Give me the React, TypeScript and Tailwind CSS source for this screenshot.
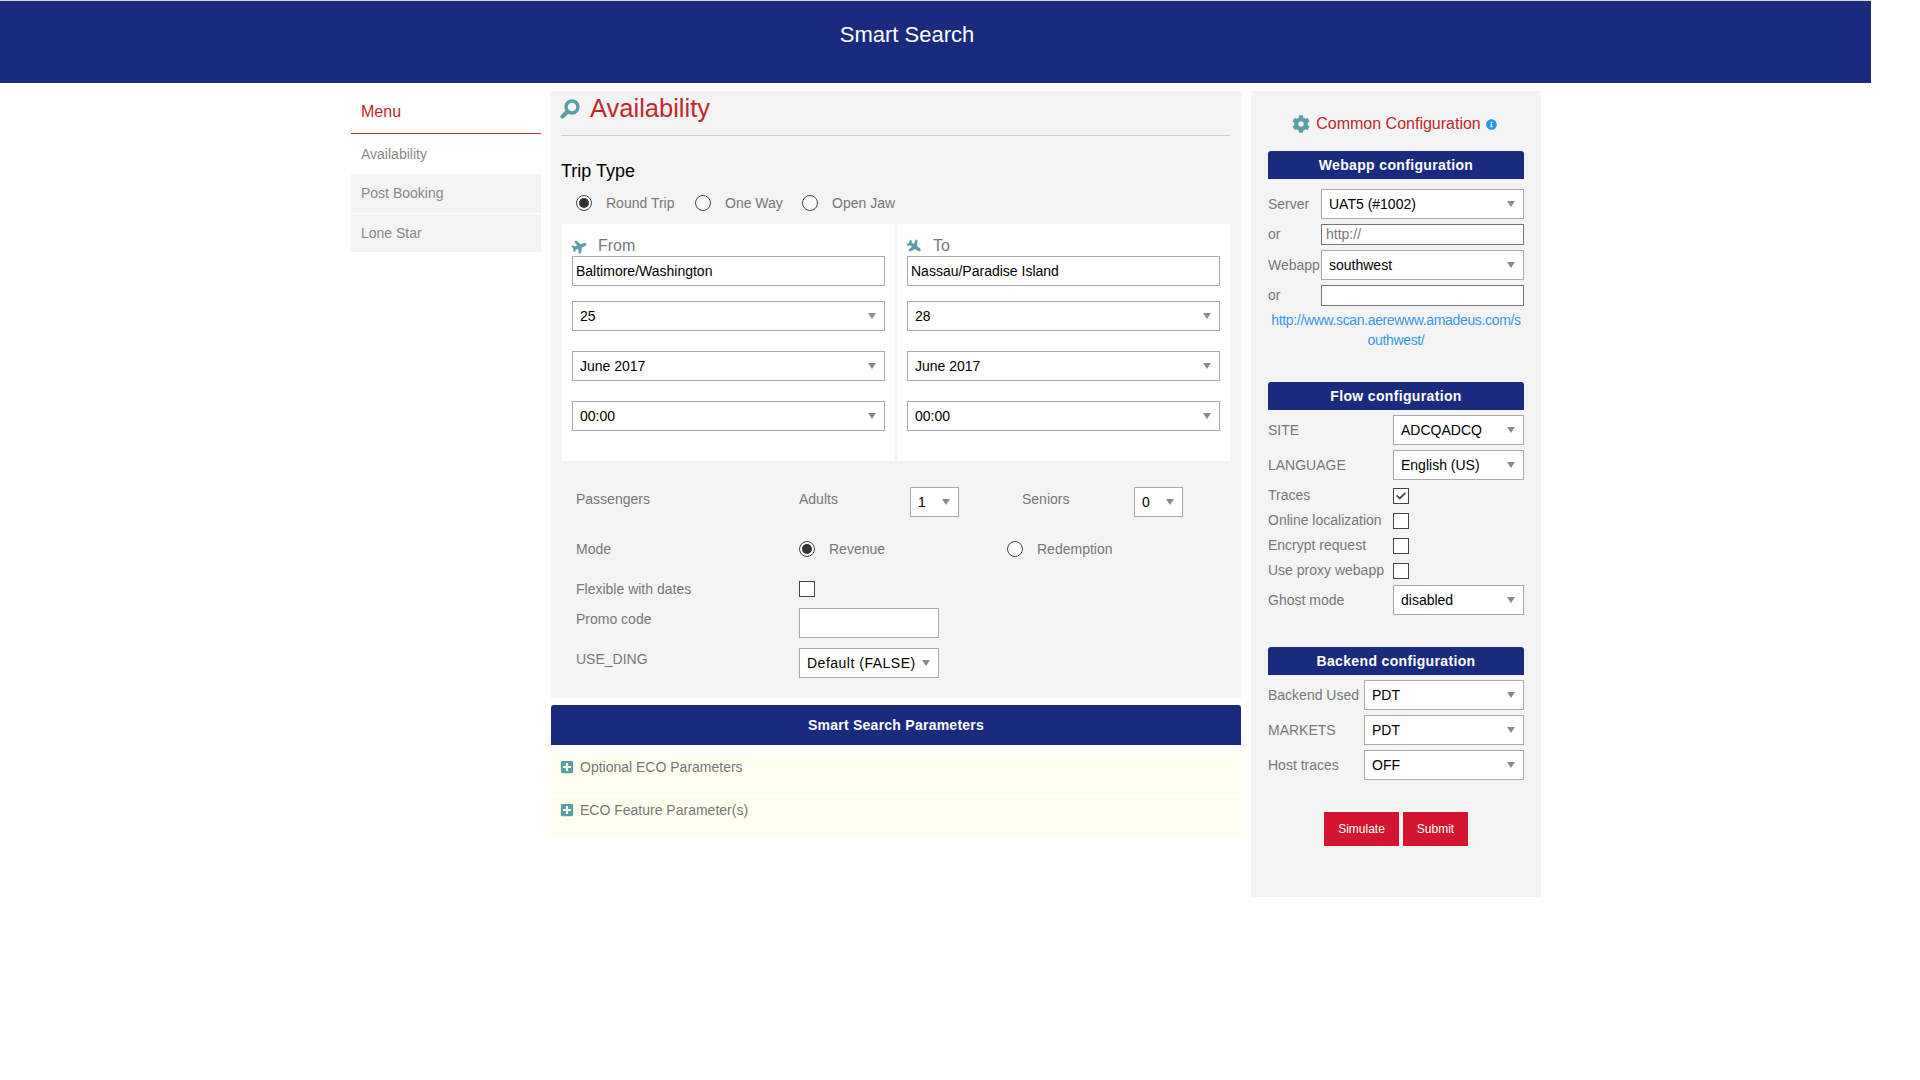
import React from "react";
import { FaPlane, FaCog, FaInfoCircle, FaPlusSquare, FaCheck } from "react-icons/fa";

const Sel = ({ v, cls = "" }: { v: string; cls?: string }) => (
  <div className={"flex h-[30px] items-center border border-[#a9a9a9] bg-white pl-[7px] pr-[8.5px] text-[14px] text-black " + cls}>
    <span className="min-w-0 flex-1 overflow-hidden whitespace-nowrap">{v}</span>
    <span className="ml-[3px] h-0 w-0 shrink-0 border-x-[4.5px] border-t-[6px] border-x-transparent border-t-[#8a8a8a]" />
  </div>
);

const Radio = ({ on = false }: { on?: boolean }) => (
  <span className="flex h-4 w-4 shrink-0 items-center justify-center rounded-full border border-[#444] bg-white">
    {on && <span className="h-[10px] w-[10px] rounded-full bg-[#333]" />}
  </span>
);

const Check = ({ on = false }: { on?: boolean }) => (
  <span className="flex h-4 w-4 shrink-0 items-center justify-center border border-[#444] bg-white text-[#555]">
    {on && <FaCheck size={10} />}
  </span>
);

const Bar = ({ t }: { t: string }) => (
  <div className="flex h-7 items-center justify-center rounded-t-[3px] bg-[#1a2b7f] text-[14px] font-bold tracking-[0.35px] text-white">{t}</div>
);

const Leg = ({ label, city, day, flip }: { label: string; city: string; day: string; flip?: boolean }) => (
  <div className="h-[237px] w-[333px] bg-white pl-[10px] pr-[10px] pt-[12px]">
    <div className="flex h-[20px] items-center text-[16px] text-[#777]">
      <FaPlane size={15} className={"text-[#5b9ea6] " + (flip ? "rotate-[35deg]" : "-rotate-[20deg]")} />
      <span className="ml-[11px]">{label}</span>
    </div>
    <div className="flex h-[30px] items-center border border-[#a9a9a9] bg-white pl-[3px] text-[14px] text-black">{city}</div>
    <Sel v={day} cls="mt-[15px]" />
    <Sel v="June 2017" cls="mt-[20px]" />
    <Sel v="00:00" cls="mt-[20px]" />
  </div>
);

const Row = ({ label, w, children, cls = "" }: { label: string; w: number; children: React.ReactNode; cls?: string }) => (
  <div className={"flex items-center " + cls}>
    <span className="whitespace-nowrap" style={{ width: w }}>{label}</span>
    <div className="min-w-0 flex-1">{children}</div>
  </div>
);

const Txt = ({ cls = "" }: { cls?: string }) => <div className={"h-[21px] border border-[#767676] bg-white pl-[4px] text-[14px] leading-[19px] text-[#777] " + cls} />;

const Lens = () => (
  <svg width="20" height="20" viewBox="0 0 20 20" className="-ml-[1px] shrink-0">
    <circle cx="12" cy="8" r="6" fill="none" stroke="#5b9ea6" strokeWidth="3.4" />
    <line x1="7.5" y1="12.5" x2="2.5" y2="17.5" stroke="#5b9ea6" strokeWidth="4" strokeLinecap="round" />
  </svg>
);

export default function App() {
  return (
    <div className="min-h-[1080px] bg-white text-[14px] text-[#777]" style={{ fontFamily: '"Liberation Sans", Arial, sans-serif' }}>
      <header className="flex h-[83px] w-[1871px] justify-center border-t border-[#d8d8d8] bg-[#1a2b7f] pt-[21px] text-[22px] leading-[26px] text-white">
        <span className="mr-[57px]">Smart Search</span>
      </header>
      <div className="ml-[351px] mt-[8px] flex w-[1190px] items-start">
        {/* sidebar */}
        <nav className="w-[190px] shrink-0">
          <div className="h-[43px] border-b border-[#c1272d] pl-[10px] pt-[11px] text-[16px] leading-[20px] text-[#c1272d]">Menu</div>
          <div className="flex h-[40px] items-center pl-[10px] text-[#888]">Availability</div>
          <div className="flex h-[39px] items-center bg-[#f4f4f4] pl-[10px] text-[#888]">Post Booking</div>
          <div className="mt-px flex h-[38px] items-center bg-[#f4f4f4] pl-[10px] text-[#888]">Lone Star</div>
        </nav>

        {/* main */}
        <main className="ml-[10px] w-[690px] shrink-0">
          <section className="h-[607px] rounded-t-[3px] bg-[#f4f4f4] pl-[10px] pr-[11px]">
            <div className="flex h-[45px] items-center border-b border-[#ccc] pb-[9px]">
              <Lens />
              <span className="ml-[10px] text-[25.5px] text-[#c1272d]">Availability</span>
            </div>
            <div className="mt-[25px] text-[18px] leading-[20px] text-black">Trip Type</div>
            <div className="mt-[14px] flex h-[16px] items-center pl-[15px]">
              <Radio on /><span className="ml-[14px] w-[89px]">Round Trip</span>
              <Radio /><span className="ml-[14px] w-[77px]">One Way</span>
              <Radio /><span className="ml-[14px]">Open Jaw</span>
            </div>
            <div className="ml-[1px] mt-[13px] flex w-[668px] justify-between">
              <Leg label="From" city="Baltimore/Washington" day="25" />
              <Leg label="To" city="Nassau/Paradise Island" day="28" flip />
            </div>
            <div className="pl-[15px]">
              <div className="mt-[26px] flex h-[30px] items-center">
                <span className="w-[223px] -translate-y-[3px]">Passengers</span>
                <span className="w-[111px] -translate-y-[3px]">Adults</span>
                <Sel v="1" cls="w-[49px]" />
                <span className="ml-[63px] w-[112px] -translate-y-[3px]">Seniors</span>
                <Sel v="0" cls="w-[49px]" />
              </div>
              <div className="mt-[24px] flex h-[16px] items-center">
                <span className="w-[223px]">Mode</span>
                <Radio on /><span className="ml-[14px] w-[178px]">Revenue</span>
                <Radio /><span className="ml-[14px]">Redemption</span>
              </div>
              <div className="mt-[24px] flex h-[16px] items-center">
                <span className="w-[223px]">Flexible with dates</span>
                <Check />
              </div>
              <div className="mt-[11px] flex items-start">
                <span className="mt-[1px] w-[223px]">Promo code</span>
                <div className="h-[30px] w-[140px] border border-[#a9a9a9] bg-white" />
              </div>
              <div className="mt-[10px] flex items-start">
                <span className="mt-[1px] w-[223px]">USE_DING</span>
                <Sel v="Default (FALSE)" cls="w-[140px] tracking-[0.5px]" />
              </div>
            </div>
          </section>
          <div className="mt-[7px] flex h-[40px] items-center justify-center rounded-t-[3px] bg-[#1a2b7f] text-[14px] font-bold tracking-[0.25px] text-white">Smart Search Parameters</div>
          <div className="mt-[10px] flex h-[39px] items-start bg-[#fffff0] pl-[9px] pt-[2px]">
            <FaPlusSquare size={14} className="mt-[3px] text-[#5b9ea6]" /><span className="ml-[6px]">Optional ECO Parameters</span>
          </div>
          <div className="mt-[4px] flex h-[38px] items-start bg-[#fffff0] pl-[9px] pt-[2px]">
            <FaPlusSquare size={14} className="mt-[3px] text-[#5b9ea6]" /><span className="ml-[6px]">ECO Feature Parameter(s)</span>
          </div>
        </main>

        {/* right */}
        <aside className="ml-[10px] h-[806px] w-[290px] shrink-0 bg-[#f4f4f4] px-[17px]">
          <div className="flex h-[60px] items-center justify-center pr-[3px] pt-[6px] text-[16px] text-[#c1272d]">
            <FaCog size={18} className="text-[#5b9ea6]" />
            <span className="ml-[6px]">Common Configuration</span>
            <FaInfoCircle size={11} className="ml-[5px] text-[#2196f3]" />
          </div>
          <Bar t="Webapp configuration" />
          <Row label="Server" w={53} cls="mt-[10px]"><Sel v="UAT5 (#1002)" /></Row>
          <Row label="or" w={53} cls="mt-[5px]"><div className="flex h-[21px] items-center border border-[#767676] bg-white pl-[4px]">http://</div></Row>
          <Row label="Webapp" w={53} cls="mt-[5px]"><Sel v="southwest" /></Row>
          <Row label="or" w={53} cls="mt-[5px]"><Txt /></Row>
          <div className="mt-[4px] whitespace-nowrap text-center leading-[20px] tracking-[-0.35px] text-[#3a99e8]">http://www.scan.aerewww.amadeus.com/s<br />outhwest/</div>
          <div className="mt-[32px]"><Bar t="Flow configuration" /></div>
          <Row label="SITE" w={125} cls="mt-[5px]"><Sel v="ADCQADCQ" /></Row>
          <Row label="LANGUAGE" w={125} cls="mt-[5px]"><Sel v="English (US)" /></Row>
          <Row label="Traces" w={125} cls="mt-[8px] h-4 [&>span]:-translate-y-px"><Check on /></Row>
          <Row label="Online localization" w={125} cls="mt-[9px] h-4 [&>span]:-translate-y-px"><Check /></Row>
          <Row label="Encrypt request" w={125} cls="mt-[9px] h-4 [&>span]:-translate-y-px"><Check /></Row>
          <Row label="Use proxy webapp" w={125} cls="mt-[9px] h-4 [&>span]:-translate-y-px"><Check /></Row>
          <Row label="Ghost mode" w={125} cls="mt-[6px]"><Sel v="disabled" /></Row>
          <div className="mt-[32px]"><Bar t="Backend configuration" /></div>
          <Row label="Backend Used" w={96} cls="mt-[5px]"><Sel v="PDT" /></Row>
          <Row label="MARKETS" w={96} cls="mt-[5px]"><Sel v="PDT" /></Row>
          <Row label="Host traces" w={96} cls="mt-[5px]"><Sel v="OFF" /></Row>
          <div className="mt-[32px] flex justify-center gap-[4px] text-[12px] text-white">
            <button className="h-[34px] w-[75px] bg-[#d4152f]">Simulate</button>
            <button className="h-[34px] w-[65px] bg-[#d4152f]">Submit</button>
          </div>
        </aside>
      </div>
    </div>
  );
}
